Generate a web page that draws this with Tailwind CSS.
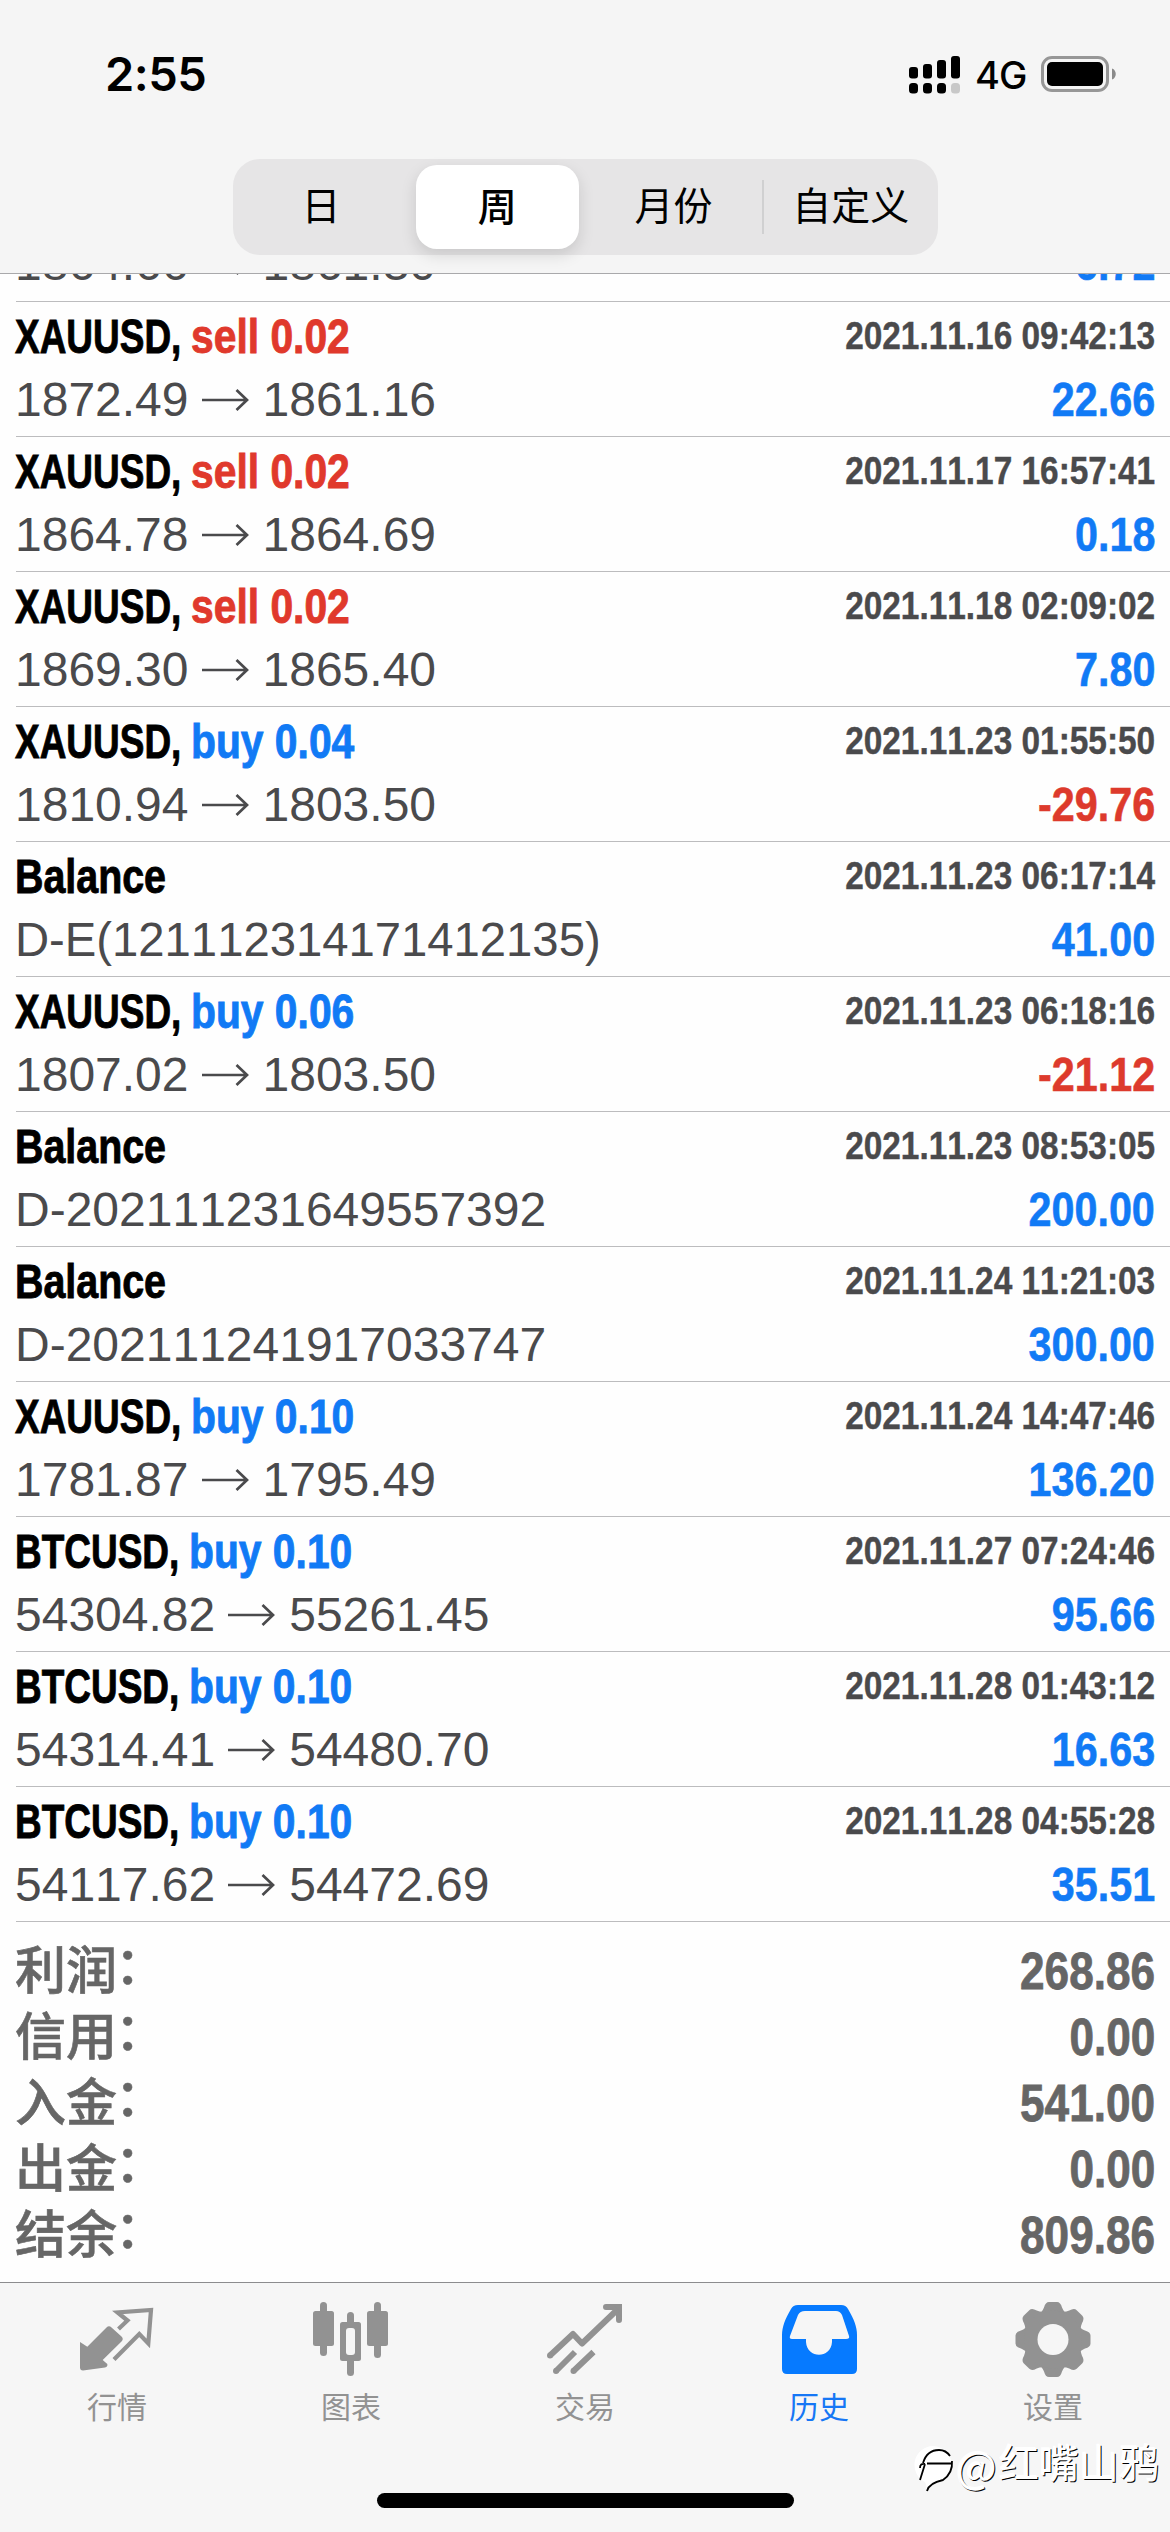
<!DOCTYPE html>
<html lang="zh-CN">
<head>
<meta charset="utf-8">
<title>历史</title>
<script src="https://cdn.jsdelivr.net/npm/@tailwindcss/browser@4"></script>
</head>
<body class="bg-white">
<div class="relative flex flex-col w-[1170px] h-[2532px] overflow-hidden bg-[#fefefe] font-['Liberation_Sans','Noto_Sans_CJK_SC',sans-serif] [font-kerning:none]">

  <header class="flex flex-col items-center h-[274px] shrink-0 bg-[#f5f5f5] border-b border-[#a9a9ab]">
    <div class="flex items-center justify-between w-full h-[150px] pl-[105px] pr-[53px]">
      <div class="mb-[3px] text-[47px] leading-none font-semibold tracking-[-0.5px] text-black font-['Inter',sans-serif]">2:55</div>
      <div class="flex items-center">
        <svg class="w-[52px] h-[38px]" viewBox="0 0 52 38">
          <g fill="#000">
            <rect x="0" y="11" width="9" height="11.500" rx="3"/><rect x="14" y="8" width="9" height="14.500" rx="3"/><rect x="28" y="4" width="9" height="18.500" rx="3"/><rect x="42" y="0" width="9" height="22.500" rx="3"/>
            <rect x="0" y="27" width="9" height="10.500" rx="3.500"/><rect x="14" y="27" width="9" height="10.500" rx="3.500"/><rect x="28" y="27" width="9" height="10.500" rx="3.500"/>
          </g>
          <rect x="42" y="27" width="9" height="10.500" rx="3.500" fill="#c8c8c8"/>
        </svg>
        <div class="ml-[14px] w-[66px] text-[38px] leading-none font-medium tracking-[-1px] text-black font-['Inter',sans-serif]">4G</div>
        <svg class="mb-[2px] w-[76px] h-[36px]" viewBox="0 0 76 36">
          <rect x="1.500" y="1.500" width="65" height="33" rx="9.500" fill="none" stroke="#979797" stroke-width="3"/>
          <rect x="6" y="6" width="56" height="24" rx="5" fill="#000"/>
          <path d="M71 12.500C76 14 76 22 71 23.500Z" fill="#8a8a8a"/>
        </svg>
      </div>
    </div>
    <div class="grid grid-cols-4 items-center mt-[9px] ml-[1px] w-[705px] h-[96px] rounded-[27px] bg-[#e6e5e6] text-[39px] leading-[86px] text-center text-black">
      <div>日</div>
      <div class="mx-[7px] h-[84px] rounded-[21px] bg-white font-medium shadow-[0_6px_16px_rgba(0,0,0,0.13)]">周</div>
      <div>月份</div>
      <div class="flex items-center"><i class="w-[2px] h-[54px] bg-[#d0d0d1]"></i><span class="grow">自定义</span></div>
    </div>
  </header>

  <main id="deals" class="flex flex-col"></main>

  <section id="totals" class="flex flex-col pl-[15px] pr-[15px] pt-[17px] text-[51px] leading-[66px] text-[#666]"></section>

  <nav class="absolute inset-x-0 bottom-0 h-[250px] bg-[#f6f6f6] border-t border-[#8c8c8e]">
    <div class="grid grid-cols-5 text-center text-[30px] leading-[40px] text-[#929292]">
      <div class="flex flex-col items-center pt-[17px]">
        <svg class="w-[78px] h-[78px]" viewBox="0 0 78 78" fill="none">
          <path d="M2 42 9.300 46.700 28.500 27.500Q31 25 33.500 27.500L43.500 36.500Q46 39 43.500 41.500L24.700 60 29.300 64Q30 66.500 27 67.500L5 70.500Q2 70.500 2 67.500Z" fill="#929292"/>
          <path d="M40.500 29 49.500 20.500 39.500 12.500 73 10 70.300 43.500 61.300 34 36 59.500" stroke="#929292" stroke-width="4.200"/>
        </svg>
        <span class="mt-[10px]">行情</span>
      </div>
      <div class="flex flex-col items-center pt-[17px]">
        <svg class="w-[78px] h-[78px]" viewBox="0 0 78 78" fill="#929292">
          <rect x="1" y="11" width="21" height="35" rx="2.500"/><rect x="8" y="2" width="7" height="54" rx="3.500"/>
          <rect x="55" y="11" width="21" height="35" rx="2.500"/><rect x="62" y="2" width="7" height="56" rx="3.500"/>
          <rect x="28" y="22" width="21" height="39" rx="2.500"/><rect x="35" y="12" width="7" height="64" rx="3.500"/>
          <rect x="34" y="28" width="9" height="27" rx="3" fill="#f6f6f6"/>
        </svg>
        <span class="mt-[10px]">图表</span>
      </div>
      <div class="flex flex-col items-center pt-[17px]">
        <svg class="w-[78px] h-[78px]" viewBox="0 0 78 78" fill="none" stroke="#929292" stroke-width="6">
          <path d="M4 55.500 27 34 36 43.500 71 10" stroke-linejoin="round"/>
          <path d="M60 7H73V20" stroke-linecap="round"/>
          <path d="M66 5H75V14Z" fill="#929292" stroke-width="2"/>
          <path d="M10 71 29 52M27.500 71 47.500 52"/>
          <g fill="#929292" stroke="none"><circle cx="4" cy="55.500" r="3"/><circle cx="10" cy="71" r="3"/><circle cx="27.500" cy="71" r="3"/></g>
        </svg>
        <span class="mt-[10px]">交易</span>
      </div>
      <div class="flex flex-col items-center pt-[17px] text-[#1677f5]">
        <svg class="ml-[1px] w-[78px] h-[78px]" viewBox="0 0 78 78">
          <path fill="#067aff" fill-rule="evenodd" d="M17 5H60Q65 5 67 9C73 19 76 27 76 35V69Q76 74 71 74H6Q1 74 1 69V35C1 27 4 19 10 9Q12 5 17 5ZM24 11Q19 11 17 15L9 36Q8 39 11 39H25V42C26 59 50 59 51 42V39H65Q69 39 68 36L61 15Q59 11 55 11Z"/>
        </svg>
        <span class="mt-[10px]">历史</span>
      </div>
      <div class="flex flex-col items-center pt-[17px]">
        <svg class="w-[78px] h-[78px]" viewBox="-39 -37 78 78" fill="#929292">
          <defs><path id="tooth" d="M-15-25Q-11-27-9-32Q-7.500-37.500-4-37.500H4Q7.500-37.500 9-32Q11-27 15-25V0H-15Z"/></defs>
          <g transform="translate(0 2.500)">
            <use href="#tooth"/><use href="#tooth" transform="rotate(45)"/><use href="#tooth" transform="rotate(90)"/><use href="#tooth" transform="rotate(135)"/><use href="#tooth" transform="rotate(180)"/><use href="#tooth" transform="rotate(225)"/><use href="#tooth" transform="rotate(270)"/><use href="#tooth" transform="rotate(315)"/>
            <circle r="29"/><circle r="15.500" fill="#f6f6f6"/>
          </g>
        </svg>
        <span class="mt-[10px]">设置</span>
      </div>
    </div>
  </nav>

  <div class="absolute left-[377px] top-[2493px] w-[417px] h-[15px] rounded-full bg-black"></div>

  <div class="absolute left-[912px] top-[2439px] flex items-start text-[40px] leading-[50px] text-white [text-shadow:1px_1px_0_#000,-1px_-1px_0_#fff] whitespace-nowrap">
    <svg class="w-[44px] h-[54px]" viewBox="0 0 44 54" fill="none">
      <path d="M21 7A19 19 0 0 1 38 34Q35 41 25 43Q18 46 14 51Q15 47 13 43A19 19 0 0 1 21 7Z" fill="#fff"/>
      <path d="M13 25Q8 24 8 29M11 24Q15 11 27 11Q34 11 38 17M15 24.500H40M13 25 8 41M40 22Q41 34 31 41Q17 44 15 52" stroke="#000" stroke-width="1.800"/>
    </svg>
    <span class="w-[43px] text-[43px] font-['Noto_Sans_CJK_SC',sans-serif]">@</span><span>红嘴山鸦</span>
  </div>
</div>

<script>
const deals = [
  ['XAUUSD', 'sell 0.02', '2021.11.16 09:42:13', '1872.49', '1861.16', '22.66'],
  ['XAUUSD', 'sell 0.02', '2021.11.17 16:57:41', '1864.78', '1864.69', '0.18'],
  ['XAUUSD', 'sell 0.02', '2021.11.18 02:09:02', '1869.30', '1865.40', '7.80'],
  ['XAUUSD', 'buy 0.04', '2021.11.23 01:55:50', '1810.94', '1803.50', '-29.76'],
  ['Balance', '', '2021.11.23 06:17:14', 'D-E(121112314171412135)', '', '41.00'],
  ['XAUUSD', 'buy 0.06', '2021.11.23 06:18:16', '1807.02', '1803.50', '-21.12'],
  ['Balance', '', '2021.11.23 08:53:05', 'D-202111231649557392', '', '200.00'],
  ['Balance', '', '2021.11.24 11:21:03', 'D-202111241917033747', '', '300.00'],
  ['XAUUSD', 'buy 0.10', '2021.11.24 14:47:46', '1781.87', '1795.49', '136.20'],
  ['BTCUSD', 'buy 0.10', '2021.11.27 07:24:46', '54304.82', '55261.45', '95.66'],
  ['BTCUSD', 'buy 0.10', '2021.11.28 01:43:12', '54314.41', '54480.70', '16.63'],
  ['BTCUSD', 'buy 0.10', '2021.11.28 04:55:28', '54117.62', '54472.69', '35.51'],
];
const arrow = '<svg class="mx-[13px] w-[48px] h-[22px]" viewBox="0 0 48 22" fill="none" stroke="#4a4a4c" stroke-width="2.700"><path d="M0 11H45M34.500 1 45 11 34.500 21"/></svg>';
const detail = (from, to, profit) => `
  <div class="flex justify-between h-[67px] text-[48px] leading-[67px]">
    <div class="flex items-center text-[#4a4a4c] origin-left ${from.includes('(') ? 'scale-x-[0.984]' : ''}"><span>${from}</span>${to ? arrow + `<span>${to}</span>` : ''}</div>
    <div class="font-bold origin-right scale-x-[0.86] [-webkit-text-stroke:0.6px] ${profit[0] === '-' ? 'text-[#dd3a2c]' : 'text-[#117af5]'}">${profit}</div>
  </div>`;
const title = (name, order) => !order
  ? `<div class="origin-left scale-x-[0.82]">${name}</div>`
  : `<div class="flex"><div class="${name === 'XAUUSD' ? 'w-[176px]' : 'w-[174px]'}"><div class="origin-left scale-x-[0.77]">${name},</div></div>
     <div class="origin-left scale-x-[0.85] ${order[0] === 's' ? 'text-[#e0392c]' : 'text-[#117af5]'}">${order}</div></div>`;
document.getElementById('deals').innerHTML = `
  <div class="flex flex-col justify-end h-[28px] overflow-hidden">
    <div class="shrink-0 h-[71px] pl-[15px] pr-[15px]">${detail('1864.66', '1861.30', '6.72')}</div>
    <div class="shrink-0 ml-[16px] h-px bg-[#bcbcbe]"></div>
  </div>` + deals.map(([name, order, time, from, to, profit]) => `
  <div class="h-[135px] flex flex-col">
    <div class="grow pl-[15px] pr-[15px] pt-[4px]">
      <div class="flex justify-between h-[60px] text-[48px] leading-[61px] font-bold text-black whitespace-nowrap [-webkit-text-stroke:0.9px]">
        ${title(name, order)}
        <div class="text-[39px] leading-[60px] text-[#4a4a4c] origin-right scale-x-[0.856] [-webkit-text-stroke:0.4px]">${time}</div>
      </div>
      ${detail(from, to, profit)}
    </div>
    <div class="ml-[16px] h-px bg-[#bcbcbe]"></div>
  </div>`).join('');
document.getElementById('totals').innerHTML = [['利润', '268.86'], ['信用', '0.00'], ['入金', '541.00'], ['出金', '0.00'], ['结余', '809.86']].map(([k, v]) => `
  <div class="flex justify-between h-[66px]"><span class="flex font-medium [-webkit-text-stroke:0.6px]">${k}<span class="-mt-[5px] -ml-[2px]">：</span></span><span class="font-bold origin-right scale-x-[0.865] [-webkit-text-stroke:0.8px]">${v}</span></div>`).join('');
</script>
</body>
</html>
